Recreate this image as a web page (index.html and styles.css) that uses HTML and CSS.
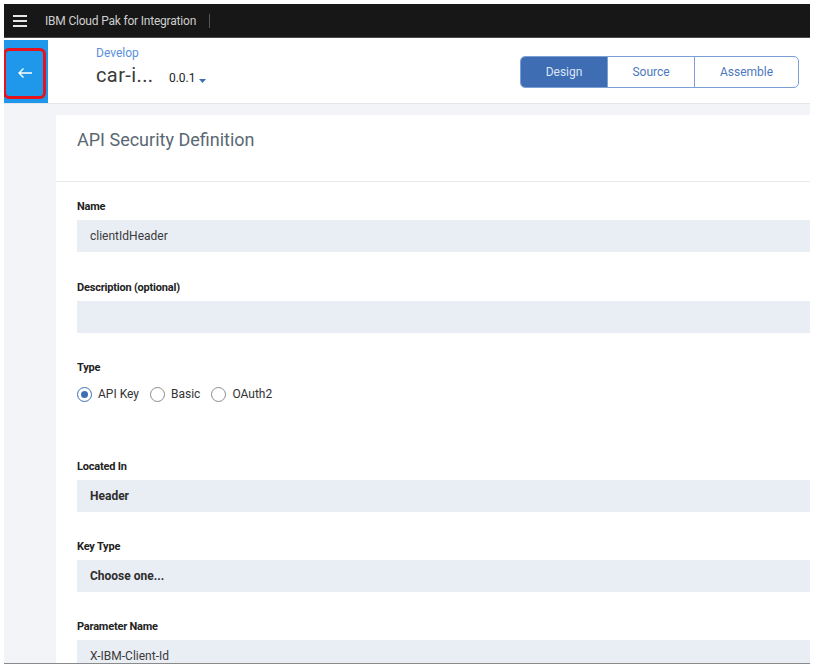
FILE: index.html
```html
<!DOCTYPE html>
<html>
<head>
<meta charset="utf-8">
<link rel="stylesheet" href="styles.css">
</head>
<body>
<div class="frame">
  <div class="topbar">
    <svg class="hamburger" width="14" height="12" viewBox="0 0 14 12"><rect x="0" y="0" width="14" height="2" fill="#e6e6e6"/><rect x="0" y="5" width="14" height="2" fill="#e6e6e6"/><rect x="0" y="10" width="14" height="2" fill="#e6e6e6"/></svg>
    <span class="product">IBM Cloud Pak for Integration</span>
    <span class="sep"></span>
  </div>
  <div class="header">
    <div class="back">
      <svg width="16" height="12" viewBox="0 0 16 12"><path d="M15 6H2M6.5 1.5L2 6l4.5 4.5" fill="none" stroke="#fff" stroke-width="1.4"/></svg>
      <span class="annot"></span>
    </div>
    <div class="titles">
      <div class="crumb">Develop</div>
      <div class="apiname">car-i... <span class="version">0.0.1</span><svg class="caret" width="7" height="4" viewBox="0 0 7 4"><path d="M0 0h7L3.5 4z" fill="#3d70b2"/></svg></div>
    </div>
    <div class="tabs">
      <div class="tab active">Design</div>
      <div class="tab">Source</div>
      <div class="tab wide">Assemble</div>
    </div>
  </div>
  <div class="main">
    <div class="card">
      <div class="card-title">API Security Definition</div>
      <div class="form">
        <div class="field">
          <div class="label">Name</div>
          <div class="input">clientIdHeader</div>
        </div>
        <div class="field">
          <div class="label">Description (optional)</div>
          <div class="input"></div>
        </div>
        <div class="field type">
          <div class="label">Type</div>
          <div class="radios">
            <span class="radio checked"></span><span class="rlabel">API Key</span>
            <span class="radio"></span><span class="rlabel">Basic</span>
            <span class="radio"></span><span class="rlabel">OAuth2</span>
          </div>
        </div>
        <div class="field">
          <div class="label">Located In</div>
          <div class="input bold">Header</div>
        </div>
        <div class="field">
          <div class="label">Key Type</div>
          <div class="input bold">Choose one...</div>
        </div>
        <div class="field">
          <div class="label">Parameter Name</div>
          <div class="input">X-IBM-Client-Id</div>
        </div>
      </div>
    </div>
  </div>
</div>
</body>
</html>
```
FILE: styles.css
```css
* { box-sizing: border-box; }
html, body { margin: 0; padding: 0; background: #fff; }
body { font-family: Roboto, "Noto Sans", sans-serif; color: #333; }
.frame {
  margin: 4px 0 0 4px;
  width: 806px;
  height: 660px;
  overflow: hidden;
  border-bottom: 1px solid #8a8a8a;
  background: #f3f4f7;
  display: flex;
  flex-direction: column;
}
.topbar {
  height: 34px;
  flex: none;
  background: #171717;
  border-bottom: 1px solid #4a4a4a;
  display: flex;
  align-items: center;
  padding-left: 9px;
}
.hamburger { margin-top: 1px; }
.product {
  margin-left: 18px;
  font-size: 12px;
  color: #cfcfcf;
  letter-spacing: -0.2px;
}
.sep { width: 1px; height: 14px; background: #555; margin-left: 13px; }
.header {
  height: 66px;
  flex: none;
  background: #fff;
  border-bottom: 1px solid #e3e5ea;
  display: flex;
  padding-top: 2px;
}
.back {
  position: relative;
  width: 44px;
  height: 63px;
  background: #1f97ea;
  display: flex;
  align-items: center;
  justify-content: center;
}
.back svg { margin-left: -2px; margin-top: 2px; }
.annot {
  position: absolute;
  left: -1px;
  top: 8px;
  width: 43px;
  height: 51px;
  border: 3px solid #e5131c;
  border-radius: 6px;
}
.titles { margin-left: 48px; padding-top: 6px; }
.crumb { font-size: 12px; color: #5b8fdc; line-height: 14px; }
.apiname { font-size: 20px; color: #3a3a3a; margin-top: 3px; line-height: 24px; letter-spacing: 0.4px; }
.version { font-size: 12px; color: #222; margin-left: 10px; letter-spacing: 0; }
.caret { margin-left: 4px; vertical-align: -1px; }
.tabs {
  margin-left: auto;
  margin-right: 11px;
  margin-top: 16px;
  height: 32px;
  display: flex;
  border: 1px solid #7ba0d6;
  border-radius: 5px;
  overflow: hidden;
}
.tab {
  width: 87px;
  display: flex;
  align-items: center;
  justify-content: center;
  font-size: 12px;
  color: #4d78bd;
  border-left: 1px solid #7ba0d6;
}
.tab:first-child { border-left: none; width: 86px; }
.tab.wide { width: 104px; }
.tab.active { background: #3e6db4; color: #dde6f4; }
.main { flex: 1; padding: 11px 0 0 52px; }
.card { width: 820px; background: #fff; height: 100%; }
.card-title {
  height: 67px;
  border-bottom: 1px solid #e6e8ec;
  padding: 15px 0 0 21px;
  font-size: 18px;
  line-height: 20px;
  color: #5a6872;
}
.form { padding: 18px 0 0 21px; }
.field { margin-bottom: 28px; }
.field:first-child { margin-bottom: 29px; }
.label { font-size: 11px; font-weight: 700; line-height: 14px; color: #222; margin-bottom: 6px; letter-spacing: -0.2px; }
.input {
  height: 32px;
  background: #e9edf4;
  padding-left: 13px;
  font-size: 12px;
  line-height: 32px;
  color: #3a3a3a;
}
.input.bold { font-weight: 700; color: #2e2e2e; }
.type { margin-bottom: 58px; }
.type .label { margin-bottom: 11px; }
.radios { display: flex; align-items: center; height: 16px; font-size: 12px; color: #333; }
.radio {
  width: 15px; height: 15px;
  border: 1px solid #8d8d8d;
  border-radius: 50%;
  position: relative;
  flex: none;
}
.radio.checked { border-color: #3d70b2; }
.radio.checked::after {
  content: "";
  position: absolute;
  left: 3px; top: 3px;
  width: 7px; height: 7px;
  border-radius: 50%;
  background: #3d70b2;
}
.rlabel { margin-left: 6px; margin-right: 11px; }
```
